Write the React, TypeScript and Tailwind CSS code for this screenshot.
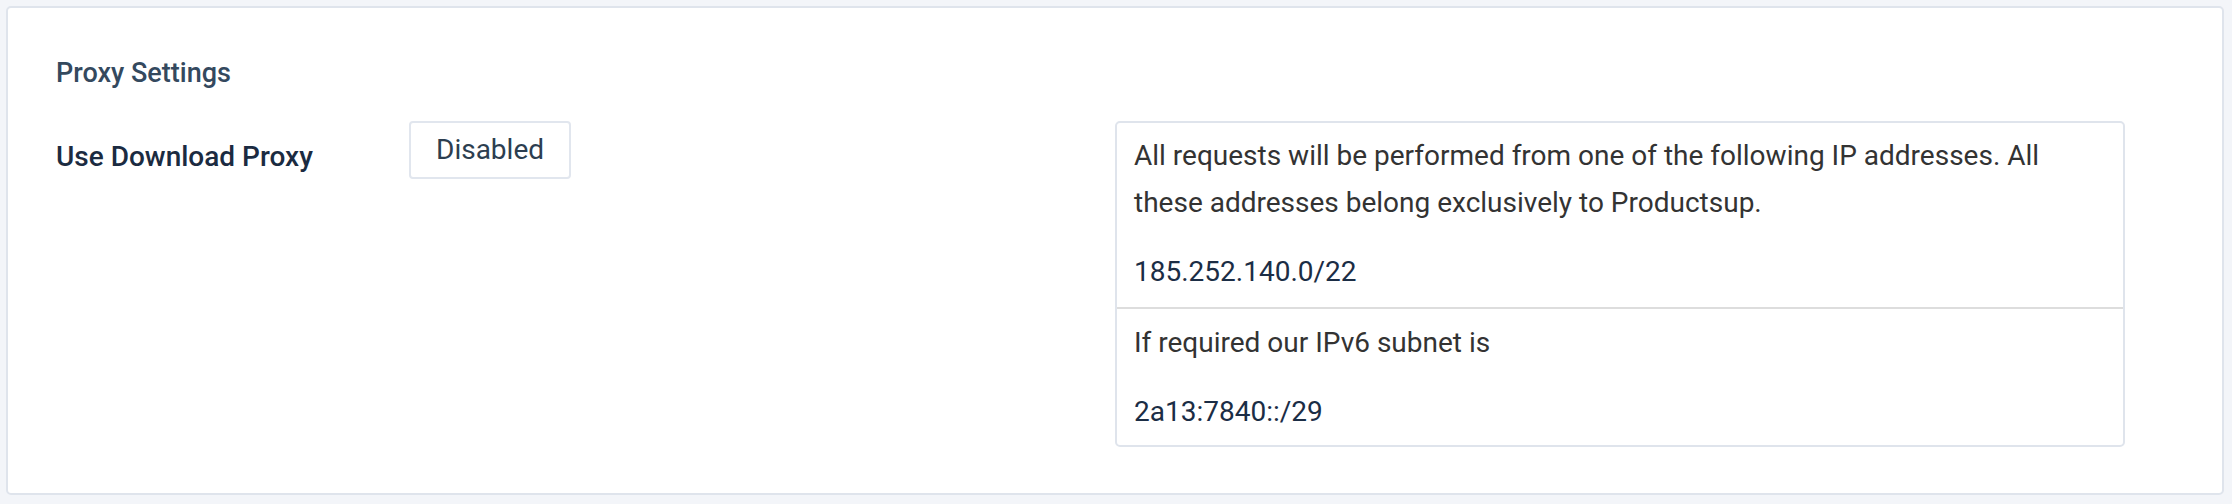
import React from "react";

export default function App() {
  return (
    <div
      className="w-[2232px] h-[504px] bg-[#f3f5f9] pl-[6px] pt-[6px] pr-[8px] pb-[9px]"
      style={{ fontFamily: "Roboto, 'Noto Sans', sans-serif" }}
    >
      <div className="h-full bg-white border-2 border-[#dfe4ec] rounded-[5px] pl-[48px] pt-[44px]">
        <h2 className="text-[27px] leading-[42px] font-medium text-[#34495e]">Proxy Settings</h2>
        <div className="flex mt-[27px]">
          <div className="w-[353px] mt-[15px] text-[28px] leading-[42px] font-medium text-[#1b2b41]">
            Use Download Proxy
          </div>
          <div className="w-[706px]">
            <div className="inline-flex items-center justify-center h-[58px] px-[25px] border-2 border-[#e1e6ee] rounded-[4px] text-[28px] text-[#2c3e50]">
              Disabled
            </div>
          </div>
          <div className="w-[1010px] border-2 border-[#dfe4ec] rounded-[5px] text-[28px] leading-[47px]">
            <div className="px-[17px] pt-[9px] pb-[12px] border-b-2 border-[#dddddd]">
              <p className="text-[#333333]">
                All requests will be performed from one of the following IP addresses. All these addresses belong exclusively to Productsup.
              </p>
              <p className="mt-[22px] text-[#1b2d45]">185.252.140.0/22</p>
            </div>
            <div className="px-[17px] pt-[10px] pb-[10px]">
              <p className="text-[#333333]">If required our IPv6 subnet is</p>
              <p className="mt-[22px] text-[#1b2d45]">2a13:7840::/29</p>
            </div>
          </div>
        </div>
      </div>
    </div>
  );
}
